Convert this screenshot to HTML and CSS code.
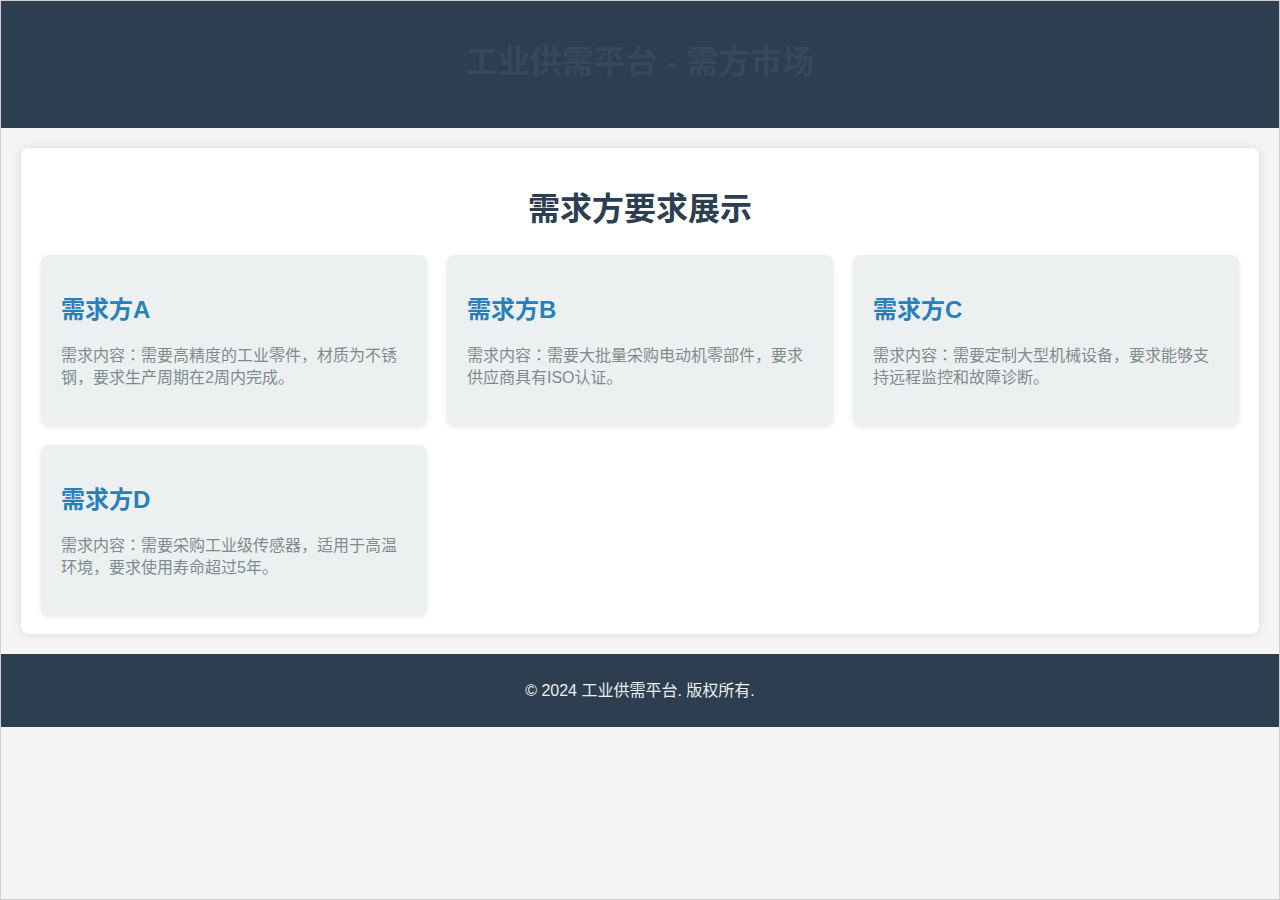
FILE: index.html
```
<!DOCTYPE html>
<html>
<head>
<meta charset="utf-8">
<title>工业供需平台 - 需方市场</title>
<link rel="stylesheet" href="styles.css">
</head>
<body>
<header class="site-header">
  <h1 class="site-title">工业供需平台 - 需方市场</h1>
</header>
<main class="main">
  <section class="panel">
    <h2 class="panel-title">需求方要求展示</h2>
    <div class="grid">
      <div class="card">
        <h3 class="card-title">需求方A</h3>
        <p class="card-text">需求内容：需要高精度的工业零件，材质为不锈钢，要求生产周期在2周内完成。</p>
      </div>
      <div class="card">
        <h3 class="card-title">需求方B</h3>
        <p class="card-text">需求内容：需要大批量采购电动机零部件，要求供应商具有ISO认证。</p>
      </div>
      <div class="card">
        <h3 class="card-title">需求方C</h3>
        <p class="card-text">需求内容：需要定制大型机械设备，要求能够支持远程监控和故障诊断。</p>
      </div>
      <div class="card">
        <h3 class="card-title">需求方D</h3>
        <p class="card-text">需求内容：需要采购工业级传感器，适用于高温环境，要求使用寿命超过5年。</p>
      </div>
    </div>
  </section>
</main>
<footer class="site-footer">
  <p class="footer-text">© 2024 工业供需平台. 版权所有.</p>
</footer>
</body>
</html>
```
FILE: styles.css
```
* { box-sizing: border-box; }
html, body { margin: 0; padding: 0; }
body {
  font-family: "Liberation Sans", Arial, "Noto Sans CJK KR", sans-serif;
  background: #f4f4f4;
  border: 1px solid #cfcfcf;
  min-height: 900px;
  color: #333;
}
.site-header {
  background: #2c3e50;
  padding: 44px 20px 48px;
  text-align: center;
}
.site-title {
  margin: 0;
  font-size: 32px;
  font-weight: bold;
  line-height: 35px;
  color: #34495e;
}
.main {
  padding: 20px;
}
.panel {
  background: #fff;
  border-radius: 8px;
  box-shadow: 0 0 10px rgba(0,0,0,0.1);
  padding: 20px 20px 19px;
}
.panel-title {
  margin: 22px 0 27px;
  font-size: 32px;
  line-height: 38px;
  font-weight: bold;
  text-align: center;
  color: #2c3e50;
}
.grid {
  display: grid;
  grid-template-columns: repeat(3, 1fr);
  gap: 20px;
}
.card {
  background: #ecf0f1;
  border-radius: 8px;
  box-shadow: 0 2px 5px rgba(0,0,0,0.1);
  padding: 20px;
}
.card-title {
  margin: 20px 0;
  font-size: 24px;
  line-height: 30px;
  font-weight: bold;
  color: #2980b9;
}
.card-text {
  margin: 0 0 16px;
  font-size: 16px;
  line-height: 22px;
  color: #7f8c8d;
}
.site-footer {
  background: #2c3e50;
  padding: 26px 20px;
  text-align: center;
}
.footer-text {
  margin: 0;
  font-size: 16px;
  line-height: 21px;
  color: #ecf0f1;
}
```
